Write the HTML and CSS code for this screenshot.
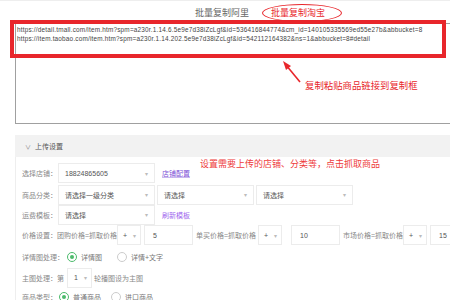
FILE: index.html
```html
<!DOCTYPE html>
<html lang="zh-CN">
<head>
    <meta charset="UTF-8">
    <meta name="viewport" content="width=device-width, initial-scale=1.0">
    <title>批量复制</title>
    <link rel="stylesheet" href="styles.css">
</head>
<body>
    <div class="tabs">
        <span class="tab">批量复制阿里</span>
        <span class="tab tab-active">批量复制淘宝</span>
    </div>

    <div class="paste-box">
        <div class="url">https://detail.tmall.com/item.htm?spm=a230r.1.14.6.5e9e7d38iZcLgf&amp;id=536416844774&amp;cm_id=140105335569ed55e27b&amp;abbucket=8</div>
        <div class="url">https://item.taobao.com/item.htm?spm=a230r.1.14.202.5e9e7d38iZcLgf&amp;id=542112164382&amp;ns=1&amp;abbucket=8#detail</div>
    </div>

    <div class="section">
        <div class="section-head"><span class="chev">&#8744;</span>上传设置</div>
        <div class="section-body">
            <div class="row row-tall">
                <span class="label">选择店铺：</span>
                <div class="select">18824865605<span class="caret">&#9662;</span></div>
                <a class="link">店铺配置</a>
            </div>
            <div class="row">
                <span class="label">商品分类：</span>
                <div class="select">请选择一级分类<span class="caret">&#9662;</span></div>
                <div class="select">请选择<span class="caret">&#9662;</span></div>
                <div class="select">请选择<span class="caret">&#9662;</span></div>
            </div>
            <div class="row row-short">
                <span class="label">运费模板：</span>
                <div class="select">请选择<span class="caret">&#9662;</span></div>
                <a class="link link-light">刷新模板</a>
            </div>
            <div class="row row-tall">
                <span class="ptext ptext-1">价格设置：团购价格=抓取价格</span>
                <div class="select select-sm">+<span class="caret">&#9662;</span></div>
                <div class="input">5</div>
                <span class="ptext ptext-2">单买价格=抓取价格</span>
                <div class="select select-sm">+<span class="caret">&#9662;</span></div>
                <div class="input input-gap">10</div>
                <span class="ptext ptext-3">市场价格=抓取价格</span>
                <div class="select select-sm">+<span class="caret">&#9662;</span></div>
                <div class="input">15</div>
            </div>
            <div class="row row-tall">
                <span class="label label-wide">详情图处理：</span>
                <span class="radio checked"></span><span class="opt">详情图</span>
                <span class="radio"></span><span class="opt">详情+文字</span>
            </div>
            <div class="row row-short">
                <span class="label label-wide">主图处理：第</span>
                <div class="select select-num">1<span class="caret">&#9662;</span></div>
                <span class="after">轮播图设为主图</span>
            </div>
            <div class="row row-short">
                <span class="label label-type">商品类型：</span>
                <span class="radio checked"></span><span class="opt">普通商品</span>
                <span class="radio"></span><span class="opt">进口商品</span>
            </div>
        </div>
    </div>

    <!-- annotations drawn over the screenshot -->
    <div class="mark-box"></div>
    <div class="mark-ellipse"></div>
    <svg class="mark-arrow" width="30" height="30" viewBox="0 0 30 30">
        <line x1="22" y1="24" x2="8" y2="7" stroke="#e8262b" stroke-width="1.6"/>
        <polygon points="5,3 13,8 8,12" fill="#e8262b"/>
    </svg>
    <div class="mark-note">复制粘贴商品链接到复制框</div>
    <div class="mark-tip">设置需要上传的店铺、分类等，点击抓取商品</div>
</body>
</html>
```

FILE: styles.css
```css
* {
    margin: 0;
    padding: 0;
    box-sizing: border-box;
}

body {
    width: 450px;
    height: 300px;
    overflow: hidden;
    position: relative;
    background-color: #fff;
    font-family: "Liberation Sans", "Noto Sans CJK SC", sans-serif;
    color: #777;
}

.tabs {
    height: 23px;
    border-top: 1px solid #eee;
    display: flex;
    align-items: center;
    padding-left: 195px;
    gap: 22px;
    font-size: 9px;
}

.tab {
    color: #666;
}

.tab-active {
    color: #e8262b;
}

.paste-box {
    margin-left: 15px;
    height: 101px;
    border: 1px solid #a0a0a0;
    border-right: none;
    padding: 1px 0 0 1px;
}

.url {
    font-size: 6.4px;
    letter-spacing: 0.2px;
    line-height: 9px;
    color: #444;
    white-space: nowrap;
}

.section {
    margin-top: 11px;
    margin-left: 15px;
}

.section-head {
    height: 22px;
    background-color: #f2f2f2;
    display: flex;
    align-items: center;
    padding-left: 10px;
    font-size: 7px;
    color: #555;
}

.chev {
    font-size: 6px;
    margin-right: 4px;
    color: #888;
}

.section-body {
    border-left: 1px solid #eee;
    padding: 5px 0 0 6px;
    height: 200px;
}

.row {
    height: 21px;
    display: flex;
    align-items: center;
    font-size: 7px;
    white-space: nowrap;
}

.row-tall {
    height: 22px;
}

.row-short {
    height: 19px;
}

.row > * {
    flex-shrink: 0;
}

.label {
    width: 36px;
    color: #888;
}

.label-wide {
    width: 45px;
}

.label-type {
    width: 37px;
}

.select {
    width: 97px;
    height: 20px;
    margin-right: 2px;
    border: 1px solid #ececec;
    display: flex;
    align-items: center;
    justify-content: space-between;
    padding: 0 6px;
    color: #555;
}

.caret {
    font-size: 6px;
    color: #bbb;
}

.select-sm {
    width: 24px;
    padding: 0 4px 0 5px;
    margin: 0 3px 0 4px;
}

.select-num {
    width: 25px;
    padding: 0 4px 0 6px;
    margin: 0 2px 0 0;
}

.input {
    width: 49px;
    height: 20px;
    border: 1px solid #ececec;
    display: flex;
    align-items: center;
    padding-left: 8px;
    color: #555;
    margin-right: 3px;
}

.input-gap {
    margin-left: 6px;
}

.ptext {
    color: #888;
}

.ptext-1 {
    width: 91px;
}

.ptext-2 {
    width: 58px;
}

.ptext-3 {
    width: 56px;
}

.link {
    margin-left: 5px;
    color: #7c4fd6;
    text-decoration: underline;
    text-decoration-color: #c9b8f0;
}

.link-light {
    color: #a067ee;
    text-decoration: none;
}

.radio {
    width: 10px;
    height: 10px;
    border: 1px solid #ccc;
    border-radius: 50%;
    margin: 0 4px 0 0;
    display: flex;
    align-items: center;
    justify-content: center;
}

.radio.checked {
    border-color: #4cbb6c;
}

.radio.checked::after {
    content: "";
    width: 4px;
    height: 4px;
    border-radius: 50%;
    background-color: #4cbb6c;
}

.opt {
    color: #777;
    margin-right: 10px;
    min-width: 26px;
}

.after {
    color: #888;
}

/* red annotations */
.mark-box {
    position: absolute;
    left: 10px;
    top: 20px;
    width: 436px;
    height: 38px;
    border: 4px solid #e8262b;
}

.mark-ellipse {
    position: absolute;
    left: 262px;
    top: 4px;
    width: 80px;
    height: 18px;
    border: 1.5px solid #e8262b;
    border-radius: 50%;
}

.mark-arrow {
    position: absolute;
    left: 278px;
    top: 58px;
}

.mark-note {
    position: absolute;
    left: 305px;
    top: 78px;
    font-size: 9.4px;
    color: #e8262b;
    white-space: nowrap;
}

.mark-tip {
    position: absolute;
    left: 200px;
    top: 157px;
    font-size: 9px;
    color: #ee3b3b;
    white-space: nowrap;
}
```
